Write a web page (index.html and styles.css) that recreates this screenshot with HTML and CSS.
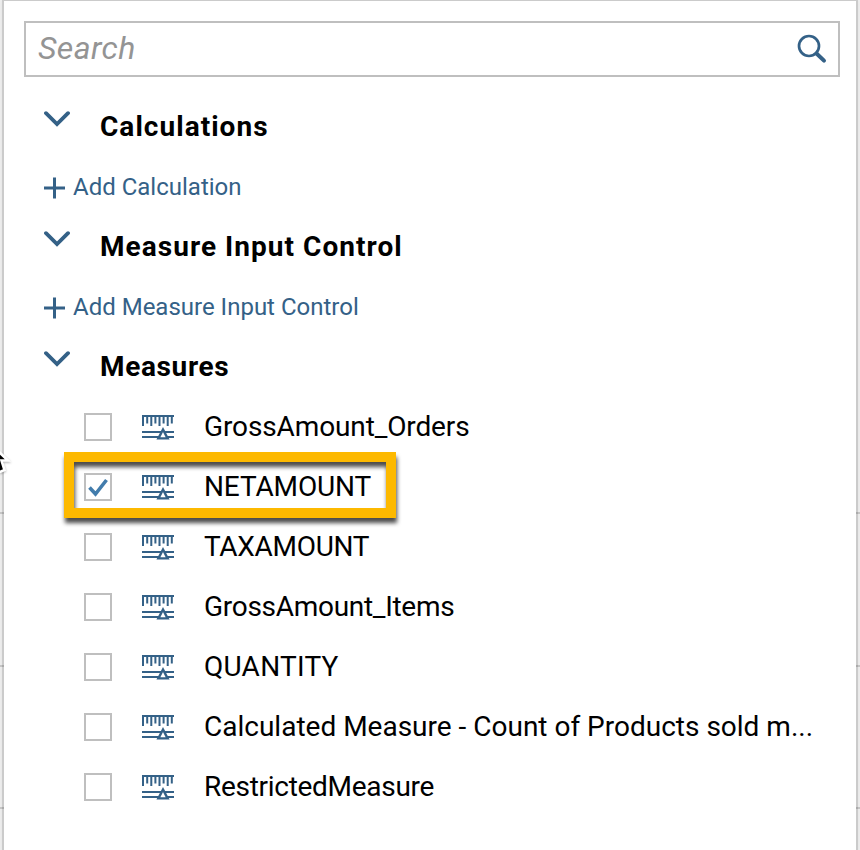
FILE: index.html
```
<!DOCTYPE html>
<html lang="en">
<head>
<meta charset="utf-8">
<title>Measures</title>
<link rel="stylesheet" href="styles.css">
</head>
<body>
<svg class="defs" width="0" height="0" aria-hidden="true">
  <symbol id="ruler" viewBox="0 0 32 26">
    <path d="M0 2H32M1 2V12M5.2 2V9.5M9.3 2V12M13.4 2V9.5M17.5 2V12M21.6 2V9.5M25.7 2V12M29.8 2V9.5" fill="none" stroke="#346187" stroke-width="2"/>
    <path d="M0 18H32M0 23H32" fill="none" stroke="#346187" stroke-width="2.2"/>
    <path d="M21 15.5L25.6 24.4H16.4Z" fill="#fff" stroke="#346187" stroke-width="2.4"/>
  </symbol>
  <symbol id="chevron" viewBox="0 0 26 16"><path d="M2 2.2L13 13L24 2.2" fill="none" stroke="#346187" stroke-width="3.8" stroke-linecap="round"/></symbol>
  <symbol id="plus" viewBox="0 0 22 22"><path d="M0 11H21M10.5 0.5V21.5" stroke="#346187" stroke-width="3"/></symbol>
</svg>
<main class="panel">
  <div class="search"><span class="placeholder">Search</span>
    <svg class="lens" viewBox="0 0 30 30"><circle cx="12" cy="12" r="10" fill="none" stroke="#346187" stroke-width="2.7"/><path d="M19.5 19.5L27 26.6" stroke="#346187" stroke-width="4" stroke-linecap="round"/></svg>
  </div>
  <div class="tree">
    <div class="row head"><svg class="chevron"><use href="#chevron"/></svg><span class="label">Calculations</span></div>
    <div class="row add"><svg class="plus"><use href="#plus"/></svg><span>Add Calculation</span></div>
    <div class="row head"><svg class="chevron"><use href="#chevron"/></svg><span class="label">Measure Input Control</span></div>
    <div class="row add"><svg class="plus"><use href="#plus"/></svg><span>Add Measure Input Control</span></div>
    <div class="row head"><svg class="chevron"><use href="#chevron"/></svg><span class="label snug">Measures</span></div>
    <div class="row item"><span class="box"></span><svg class="ruler"><use href="#ruler"/></svg><span class="label tight">GrossAmount_Orders</span></div>
    <div class="row item"><span class="box"><svg class="check" viewBox="0 0 24 24"><path d="M3.5 12.5L9.5 19L20.5 5" fill="none" stroke="#427cac" stroke-width="3.6"/></svg></span><svg class="ruler"><use href="#ruler"/></svg><span class="label tight">NETAMOUNT</span><span class="highlight"></span></div>
    <div class="row item"><span class="box"></span><svg class="ruler"><use href="#ruler"/></svg><span class="label tighter">TAXAMOUNT</span></div>
    <div class="row item"><span class="box"></span><svg class="ruler"><use href="#ruler"/></svg><span class="label tighter">GrossAmount_Items</span></div>
    <div class="row item"><span class="box"></span><svg class="ruler"><use href="#ruler"/></svg><span class="label loose">QUANTITY</span></div>
    <div class="row item"><span class="box"></span><svg class="ruler"><use href="#ruler"/></svg><span class="label">Calculated Measure - Count of Products sold m...</span></div>
    <div class="row item"><span class="box"></span><svg class="ruler"><use href="#ruler"/></svg><span class="label tighter">RestrictedMeasure</span></div>
  </div>
</main>
<i class="line l1"></i><i class="line l2"></i><i class="line l3"></i>
<svg class="pointer" viewBox="0 0 12 30"><path d="M-4 1L8 12.5H1.5L4.5 22L-3 25Z" fill="#000" stroke="#fff" stroke-width="2.6"/></svg>
</body>
</html>
```
FILE: styles.css
```
* { box-sizing: border-box; }
body { margin: 0; height: 850px; overflow: hidden; position: relative; background: #f1f1f1; font-family: Roboto, "Liberation Sans", sans-serif; color: #000; }
.defs { position: absolute; }
svg { display: block; flex: none; }
.panel { width: 856px; height: 852px; margin-left: 2px; padding: 20px 15px 0 20px; background: #fff; border: 2px solid #cbcbcb; border-top-width: 1px; box-shadow: 0 0 5px rgba(0,0,0,.08); }
.search { width: 816px; height: 56px; border: 2px solid #bfbfbf; display: flex; align-items: center; justify-content: space-between; padding: 0 11px 0 12px; }
.placeholder { font-size: 32px; font-style: italic; color: #949494; line-height: 52px; letter-spacing: .4px; padding-bottom: 2px; }
.lens { width: 30px; height: 30px; }
.tree { padding: 20px 0 0 20px; }
.row { height: 60px; display: flex; align-items: center; position: relative; white-space: nowrap; font-size: 28px; }
.label { padding-bottom: 2px; }
.head { font-weight: 700; letter-spacing: 1.04px; }
.snug { letter-spacing: .65px; }
.chevron { width: 26px; height: 16px; margin: 0 30px 16px 0; }
.add { color: #346187; font-size: 24px; }
.plus { width: 22px; height: 22px; margin: 2px 7px 0 0; }
.item { padding-left: 40px; }
.tight { letter-spacing: -.12px; }
.tighter { letter-spacing: -.29px; }
.loose { letter-spacing: .25px; }
.box { width: 28px; height: 28px; border: 2px solid #bfbfbf; flex: none; margin-right: 30px; }
.check { width: 24px; height: 24px; }
.ruler { width: 32px; height: 26px; margin-right: 30px; }
.highlight { position: absolute; left: 20px; top: -5px; width: 332px; height: 66px; border: 10px solid #fdb900; filter: drop-shadow(1px 5px 2px rgba(0,0,0,.7)); }
.line { position: absolute; left: 0; width: 860px; height: 2px; background: linear-gradient(to right, rgba(0,0,0,.16) 4px, transparent 4px, transparent 856px, rgba(0,0,0,.16) 856px); }
.l1 { top: 512px; }
.l2 { top: 665px; }
.l3 { top: 807px; }
.pointer { position: absolute; left: 0; top: 448px; width: 12px; height: 30px; filter: drop-shadow(0 1px 1px rgba(0,0,0,.3)); }
```
